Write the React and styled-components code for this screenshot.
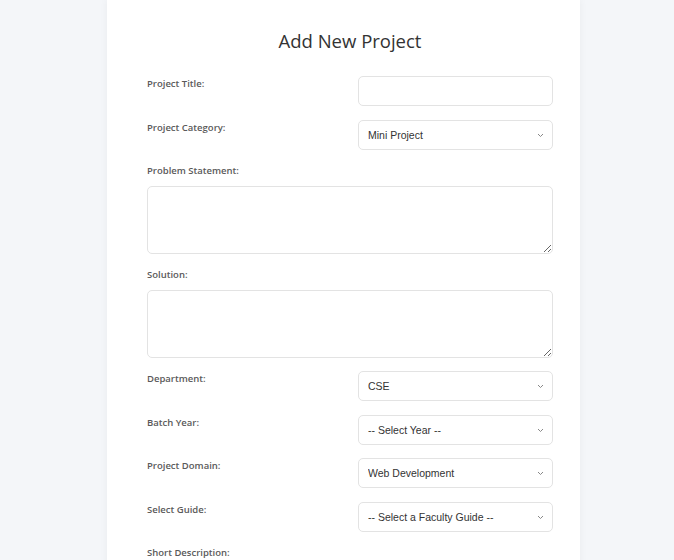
import React from 'react';
import styled, { createGlobalStyle } from 'styled-components';

const GlobalStyle = createGlobalStyle`
  body {
    margin: 0;
    background: #f4f6f9;
    font-family: 'Open Sans', 'Noto Sans', sans-serif;
  }
`;

const Page = styled.div`
  padding-left: 107px;
  min-height: 560px;
`;

const Card = styled.div`
  width: 473px;
  box-sizing: border-box;
  background: #fff;
  padding: 28px 27px 40px 40px;
  box-shadow: 0 0 8px rgba(0, 0, 0, 0.05);
`;

const Title = styled.h2`
  margin: 0 0 22px;
  text-align: center;
  font-size: 18.5px;
  font-weight: 400;
  color: #333;
  line-height: 26px;
`;

const Form = styled.form`
  display: flex;
  flex-direction: column;
  gap: 13.5px;
  width: 406px;
`;

const Row = styled.div`
  display: flex;
  justify-content: space-between;
  align-items: flex-start;
`;

const Block = styled.div`
  display: flex;
  flex-direction: column;
`;

const Label = styled.label`
  font-size: 9.5px;
  font-weight: 600;
  color: #5a5a5a;
  line-height: 12px;
  margin-top: ${p => (p.$inline ? '2px' : '1.5px')};
  margin-bottom: ${p => (p.$inline ? '0' : '9px')};
`;

const fieldBase = `
  box-sizing: border-box;
  border: 1px solid #e3e3e3;
  border-radius: 5px;
  background: #fff;
  font-family: 'Liberation Sans', Arial, sans-serif;
  font-size: 10.5px;
  color: #333;
  outline: none;
`;

const Input = styled.input`
  ${fieldBase}
  width: 195px;
  height: 30px;
  padding: 0 9px;
`;

const SelectWrap = styled.div`
  position: relative;
  width: 195px;
`;

const Select = styled.select`
  ${fieldBase}
  width: 100%;
  height: 30px;
  padding: 0 24px 0 9px;
  appearance: none;
`;

const Chevron = styled.svg`
  position: absolute;
  right: 9px;
  top: 13px;
  pointer-events: none;
`;

const TextArea = styled.textarea`
  ${fieldBase}
  width: 100%;
  height: 68px;
  resize: vertical;
`;

const Dropdown = ({ value, options }) => (
  <SelectWrap>
    <Select defaultValue={value}>
      {options.map(o => (
        <option key={o}>{o}</option>
      ))}
    </Select>
    <Chevron width="7" height="5" viewBox="0 0 7 5">
      <path d="M1 1 L3.5 3.5 L6 1" fill="none" stroke="#888" strokeWidth="1" />
    </Chevron>
  </SelectWrap>
);

export default () => {
  return (
    <>
      <GlobalStyle />
      <Page>
        <Card>
          <Title>Add New Project</Title>
          <Form>
            <Row>
              <Label $inline>Project Title:</Label>
              <Input type="text" />
            </Row>
            <Row>
              <Label $inline>Project Category:</Label>
              <Dropdown value="Mini Project" options={['Mini Project', 'Major Project']} />
            </Row>
            <Block>
              <Label>Problem Statement:</Label>
              <TextArea />
            </Block>
            <Block>
              <Label>Solution:</Label>
              <TextArea />
            </Block>
            <Row>
              <Label $inline>Department:</Label>
              <Dropdown value="CSE" options={['CSE', 'ECE', 'EEE', 'MECH']} />
            </Row>
            <Row>
              <Label $inline>Batch Year:</Label>
              <Dropdown value="-- Select Year --" options={['-- Select Year --', '2024', '2025']} />
            </Row>
            <Row>
              <Label $inline>Project Domain:</Label>
              <Dropdown value="Web Development" options={['Web Development', 'Machine Learning']} />
            </Row>
            <Row>
              <Label $inline>Select Guide:</Label>
              <Dropdown
                value="-- Select a Faculty Guide --"
                options={['-- Select a Faculty Guide --']}
              />
            </Row>
            <Block>
              <Label>Short Description:</Label>
              <TextArea />
            </Block>
          </Form>
        </Card>
      </Page>
    </>
  );
};
